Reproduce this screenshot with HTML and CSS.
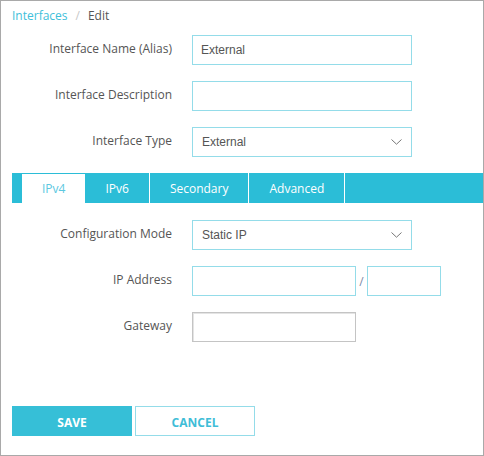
FILE: index.html
```html
<!DOCTYPE html>
<html>
<head>
<meta charset="utf-8">
<link rel="stylesheet" href="styles.css">
</head>
<body>
<div class="frame">
  <div class="crumbs">
    <a class="crumb-link">Interfaces</a>
    <span class="crumb-sep">/</span>
    <span class="crumb-cur">Edit</span>
  </div>

  <div class="form form-top">
    <label class="label">Interface Name (Alias)</label>
    <div class="field"><div class="input wide">External</div></div>

    <label class="label">Interface Description</label>
    <div class="field"><div class="input wide"></div></div>

    <label class="label">Interface Type</label>
    <div class="field">
      <div class="input wide select">
        <span>External</span>
        <svg class="chev" width="11" height="6" viewBox="0 0 11 6"><path d="M0.5 0.5 L5.5 5.2 L10.5 0.5" fill="none" stroke="#777" stroke-width="1"/></svg>
      </div>
    </div>
  </div>

  <div class="tabs">
    <div class="tab active">IPv4</div>
    <div class="tab">IPv6</div>
    <div class="tab">Secondary</div>
    <div class="tab">Advanced</div>
  </div>

  <div class="form form-tab">
    <label class="label">Configuration Mode</label>
    <div class="field">
      <div class="input wide select">
        <span>Static IP</span>
        <svg class="chev" width="11" height="6" viewBox="0 0 11 6"><path d="M0.5 0.5 L5.5 5.2 L10.5 0.5" fill="none" stroke="#777" stroke-width="1"/></svg>
      </div>
    </div>

    <label class="label">IP Address</label>
    <div class="field">
      <div class="input ip"></div>
      <span class="slash">/</span>
      <div class="input mask"></div>
    </div>

    <label class="label">Gateway</label>
    <div class="field"><div class="input ip plain"></div></div>
  </div>

  <div class="actions">
    <button class="btn btn-save">SAVE</button>
    <button class="btn btn-cancel">CANCEL</button>
  </div>
</div>
</body>
</html>
```

FILE: styles.css
```css
html, body {
  margin: 0;
  padding: 0;
  background: #fff;
}
.frame {
  width: 484px;
  height: 456px;
  box-sizing: border-box;
  border: 1px solid #a9a9a9;
  padding-left: 11px;
  font-family: "Open Sans", "Liberation Sans", sans-serif;
  font-size: 12px;
  color: #555;
}
.crumbs {
  height: 29px;
  line-height: 29px;
  display: flex;
  gap: 8px;
}
.crumb-link { color: #3ec0da; }
.crumb-sep { color: #c8c8c8; }
.crumb-cur { color: #555; }

.form {
  display: grid;
  grid-template-columns: 160px auto;
  column-gap: 20px;
  row-gap: 16px;
  align-items: center;
}
.form-top { margin-top: 5px; }
.form-tab { margin-top: 17px; row-gap: 16px; }
.label {
  text-align: right;
  color: #555;
  line-height: 16px;
  padding-bottom: 2px;
}
.field {
  display: flex;
  align-items: center;
}
.input {
  box-sizing: border-box;
  height: 30px;
  border: 1px solid #94dce9;
  background: #fff;
  font-family: "Liberation Sans", Arial, sans-serif;
  font-size: 12px;
  color: #555;
  line-height: 28px;
  padding-left: 8px;
}
.wide { width: 220px; }
.select {
  display: flex;
  align-items: center;
  justify-content: space-between;
  padding-left: 9px;
  padding-right: 9px;
}
.chev { display: block; }
.ip { width: 164px; }
.mask { width: 74px; }
.slash {
  width: 11px;
  text-align: center;
  color: #7c8aa6;
  font-size: 12px;
}
.plain {
  border: 1px solid #c4c4c4;
  box-shadow: inset 1px 1px 0 #e4e4e4;
}

.tabs {
  margin-top: 16px;
  height: 30px;
  background: #2bbdd7;
  display: flex;
  padding-left: 10px;
}
.tab {
  padding: 1px 20px 0;
  line-height: 30px;
  height: 30px;
  box-sizing: border-box;
  color: #fff;
  border-right: 1px solid #fff;
}
.tab.active {
  background: #fff;
  color: #5cc8df;
  margin-top: 1px;
  padding-top: 0;
  height: 29px;
  line-height: 30px;
  border-right: none;
}

.actions {
  margin-top: 64px;
  display: flex;
  gap: 3px;
}
.btn {
  box-sizing: border-box;
  width: 120px;
  height: 30px;
  font-family: "Open Sans", "Liberation Sans", sans-serif;
  font-size: 12px;
  font-weight: 700;
  padding: 2px 0 0;
  cursor: pointer;
}
.btn-save {
  background: #36bfd7;
  border: none;
  color: #fff;
}
.btn-cancel {
  background: #fff;
  border: 1px solid #94dce9;
  color: #3fbdd7;
}
```
